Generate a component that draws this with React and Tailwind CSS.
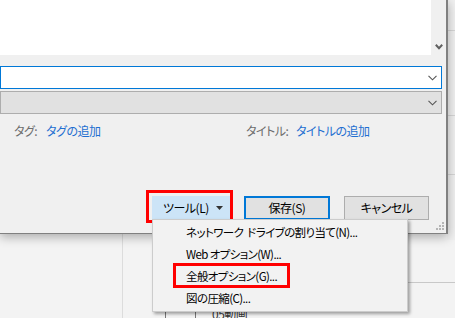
export default function App() {
  const font = "font-['Noto_Sans_CJK_JP','Noto_Sans',sans-serif] [font-feature-settings:'palt']";
  const ComboChevron = () => (
    <svg width="9" height="6" viewBox="0 0 9 6" className="mr-[4px]">
      <path d="M0.5 0.8 L4.5 4.8 L8.5 0.8" fill="none" stroke="#555" strokeWidth="1.1" />
    </svg>
  );
  return (
    <div className={`relative w-[455px] h-[318px] overflow-hidden bg-[#f3f3f3] text-[12px] leading-none tracking-[-0.5px] text-black ${font}`}>
      {/* underlying window content */}
      <div className="absolute left-[447px] top-0 w-[8px] h-[240px] bg-[#f0f0f0]" />
      <div className="absolute left-[447px] top-[30px] w-[8px] h-px bg-[#d6d6d6]" />
      <div className="absolute left-[447px] top-[115px] w-[8px] h-px bg-[#d6d6d6]" />
      <div className="absolute left-[447px] top-[174px] w-[8px] h-px bg-[#d6d6d6]" />
      <div className="absolute left-[122px] top-[233px] w-px h-[85px] bg-[#dcdcdc]" />
      <div className="absolute left-[300px] top-[282px] w-[155px] h-px bg-[#c8c8c8]" />
      <div className="absolute left-[165px] top-[306px] w-px h-[12px] bg-[#777]" />
      <div className="absolute left-[195px] top-[306px] w-px h-[12px] bg-[#777]" />
      <div className="absolute left-[212px] top-[308px] text-[12px] text-[#333]">05動画</div>

      {/* dialog */}
      <div className="absolute left-0 top-0 w-[448px] h-[234px] bg-[#f0f0f0] border-r-2 border-b border-[#808080] shadow-[0_3px_10px_rgba(0,0,0,0.3)] flex flex-col">
        <div className="flex h-[55px]">
          <div className="w-[431px] bg-white" />
          <div className="flex-1 flex items-end justify-center pb-[5px]">
            <svg width="8" height="6" viewBox="0 0 8 6">
              <path d="M0.8 0.8 L4 4.2 L7.2 0.8" fill="none" stroke="#606060" strokeWidth="2" />
            </svg>
          </div>
        </div>
        <div className="mt-[11px] mr-[4px] h-[23px] border border-[#0078d7] bg-white flex items-center justify-end">
          <ComboChevron />
        </div>
        <div className="mt-[2px] mr-[4px] h-[23px] border border-[#adadad] bg-[#e1e1e1] flex items-center justify-end">
          <ComboChevron />
        </div>
        <div className="mt-[8px] h-[18px] flex items-center">
          <span className="ml-[14px] w-[32px] text-[#6d6d6d]">タグ:</span>
          <span className="w-[200px] text-[#1f6fd1]">タグの追加</span>
          <span className="w-[50px] text-[#6d6d6d]">タイトル:</span>
          <span className="text-[#1f6fd1]">タイトルの追加</span>
        </div>
        <div className="mt-[56px] flex justify-end pr-[17px] gap-[14px]">
          <div className="relative">
            <div className="w-[78px] h-[24px] bg-[#cce4f7] border border-[#cce4f7] flex items-center pl-[10px]">
              <span>ツール(L)</span>
              <svg width="7" height="4" viewBox="0 0 7 4" className="ml-auto mr-[6px]">
                <path d="M0 0 L7 0 L3.5 4 Z" fill="#333" />
              </svg>
            </div>
            <div className="absolute -left-[6px] -top-[6px] w-[87px] h-[33px] border-[3px] border-[#ff0000]" />
          </div>
          <div className="w-[86px] h-[24px] bg-[#e1e1e1] border-2 border-[#0078d7] flex items-center justify-center">保存(S)</div>
          <div className="w-[85px] h-[24px] bg-[#e1e1e1] border border-[#adadad] flex items-center justify-center">キャンセル</div>
        </div>
        <svg width="8" height="8" viewBox="0 0 8 8" className="absolute left-[436px] top-[222px]">
          <rect x="6" y="0" width="2" height="2" fill="#b5b5b5" />
          <rect x="3" y="3" width="2" height="2" fill="#b5b5b5" />
          <rect x="6" y="3" width="2" height="2" fill="#b5b5b5" />
          <rect x="0" y="6" width="2" height="2" fill="#b5b5b5" />
          <rect x="3" y="6" width="2" height="2" fill="#b5b5b5" />
          <rect x="6" y="6" width="2" height="2" fill="#b5b5b5" />
        </svg>
      </div>

      {/* dropdown menu */}
      <div className="absolute left-[152px] top-[219px] w-[256px] h-[93px] bg-[#f2f2f2] border border-[#cccccc] shadow-[2px_2px_3px_rgba(0,0,0,0.35)] pt-[2px] flex flex-col text-[11.5px] tracking-[-0.6px]">
        <div className="h-[22px] flex items-center pl-[33px]">
          <span>ネットワーク</span>
          <span className="ml-[4px]">ドライブの割り当て(N)...</span>
        </div>
        <div className="h-[22px] flex items-center pl-[33px]">Web オプション(W)...</div>
        <div className="h-[22px] flex items-center pl-[33px] relative">
          全般オプション(G)...
          <div className="absolute left-[20px] top-[-3px] w-[117px] h-[25px] border-[3px] border-[#ff0000]" />
        </div>
        <div className="h-[22px] flex items-center pl-[33px]">図の圧縮(C)...</div>
      </div>
    </div>
  );
}
